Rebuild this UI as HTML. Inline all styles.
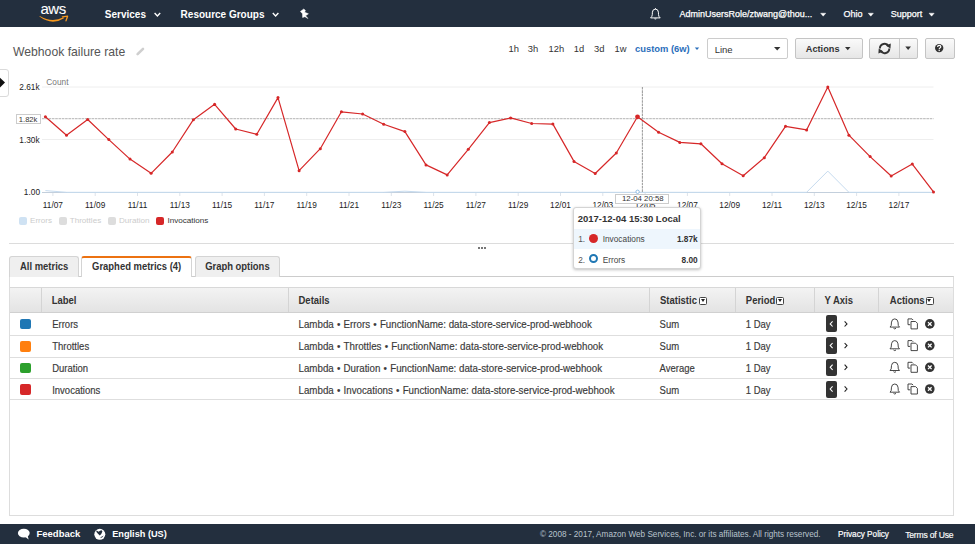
<!DOCTYPE html>
<html><head><meta charset="utf-8">
<style>
*{box-sizing:border-box;margin:0;padding:0}
html,body{width:975px;height:544px;overflow:hidden;background:#fff}
body{position:relative;font-family:"Liberation Sans",sans-serif;color:#333}
.a{position:absolute;white-space:nowrap;line-height:1}
.b{font-weight:bold}
#nav{position:absolute;left:0;top:0;width:975px;height:27px;background:#232f3e}
#foot{position:absolute;left:0;top:524px;width:975px;height:20px;background:#232f3e}
.w{color:#fff}
svg{position:absolute;left:0;top:0;overflow:visible}

.sel{position:absolute;border:1px solid #ccc;border-radius:2px;background:#fff}
.btn{position:absolute;border:1px solid #c4c4c4;border-radius:2px;background:linear-gradient(#fafafa,#e6e6e6)}
.lg{position:absolute;top:216.8px;width:8px;height:8px;border-radius:2px}
.tab{position:absolute;top:256px;height:20.8px;border:1px solid #d4d4d4;border-bottom:none;border-radius:3px 3px 0 0;background:#efefef;font-weight:bold;font-size:9.45px;line-height:19px;text-align:center;color:#333;white-space:nowrap}
.tt{display:inline-block;transform:scaleY(1.12);transform-origin:50% 70%}
.tab.act{background:#fff;border-top:2px solid #ec7211;line-height:18px;height:21px}
.th{position:absolute;background:linear-gradient(#f3f3f3,#e3e3e3);border-top:1px solid #d8d8d8;border-bottom:1px solid #d0d0d0}
.vs{position:absolute;top:288px;width:1px;height:24.4px;background:#d4d4d4}
.hd{top:296.4px;font-size:9.5px;color:#333;transform:scaleY(1.1);transform-origin:0 80%}
.dd{position:absolute;top:296.5px;width:8px;height:8px;border:1px solid #444;border-radius:1.5px;background:#fff}
.dd::after{content:"";position:absolute;left:0.7px;top:1.7px;width:0;height:0;border-left:2.3px solid transparent;border-right:2.3px solid transparent;border-top:3px solid #222}
.rb{position:absolute;left:9.8px;width:943.6px;height:1px;background:#dedede}
.sq{position:absolute;left:19.9px;width:11px;height:10.6px;border-radius:2px}
.td{font-size:9.5px;color:#3a3a3a;-webkit-text-stroke:0.15px #3a3a3a;transform:scaleY(1.14);transform-origin:0 80%}
.dt{font-size:9.75px}
.bu{margin:0 3.2px}
.yb{position:absolute;left:825.5px;width:11.4px;height:17.2px;border-radius:2px;background:#333}
</style></head><body>

<div id="nav"></div>
<!-- AWS logo -->
<div class="a w" style="left:40.4px;top:0.5px;font-size:15px;letter-spacing:-0.4px;-webkit-text-stroke:0.1px #fff">aws</div>
<svg width="975" height="30" style="top:0">
  <path d="M39.4,16.6 Q52,26 64,18.2 L63.5,17.3 Q52,23.2 39.8,16 Z" fill="#f7981d"/>
  <path d="M62.4,16.8 L67.6,16.2 L66,20.8" fill="none" stroke="#f7981d" stroke-width="1.3" stroke-linejoin="round" stroke-linecap="round"/>
  <!-- chevrons -->
  <path d="M154.6,13 L157.4,15.9 L160.2,13" fill="none" stroke="#fff" stroke-width="1.4"/>
  <path d="M272.8,13 L275.6,15.9 L278.4,13" fill="none" stroke="#fff" stroke-width="1.4"/>
  <path d="M820.6,13.2 L825.8,13.2 L823.2,16.2 Z" fill="#fff" stroke="#fff" stroke-width="0.4" stroke-linejoin="round"/>
  <path d="M868.2,13.2 L873.4,13.2 L870.8,16.2 Z" fill="#fff" stroke="#fff" stroke-width="0.4" stroke-linejoin="round"/>
  <path d="M929,13.2 L934.2,13.2 L931.6,16.2 Z" fill="#fff" stroke="#fff" stroke-width="0.4" stroke-linejoin="round"/>
  <!-- pin -->
  <path d="M300.4,11.4 L303.8,9 L305.4,10.4 L304.6,12.2 L308.4,13.8 L305.6,15.8 L307.9,18.5 L304.9,16.7 L302.6,17.5 L302.5,13.8 Z" fill="#fff" stroke="#fff" stroke-width="0.5" stroke-linejoin="round"/>
  <!-- bell -->
  <path d="M650.6,17.9 L660.2,17.9 Q658.6,16.6 658.5,14.6 L658.4,12.2 Q658.2,9.1 655.4,9.1 Q652.6,9.1 652.4,12.2 L652.3,14.6 Q652.2,16.6 650.6,17.9 Z" fill="none" stroke="#fff" stroke-width="1" stroke-linejoin="round"/>
  <path d="M654,18.6 Q655.4,20.6 656.8,18.6 Z" fill="#fff"/><rect x="655" y="8" width="0.8" height="1.3" fill="#fff"/>
</svg>
<div class="a b w" style="left:104.8px;top:10px;font-size:10px">Services</div>
<div class="a b w" style="left:180.6px;top:10px;font-size:10px">Resource Groups</div>
<div class="a w" style="left:679.5px;top:9.8px;font-size:9px;-webkit-text-stroke:0.25px #fff">AdminUsersRole/ztwang@thou...</div>
<div class="a w" style="left:843.4px;top:9.8px;font-size:9px;-webkit-text-stroke:0.25px #fff">Ohio</div>
<div class="a w" style="left:890.8px;top:9.8px;font-size:9px;-webkit-text-stroke:0.25px #fff">Support</div>

<!-- title -->
<div class="a" style="left:13px;top:45.5px;font-size:12.2px;color:#555">Webhook failure rate</div>


<!-- toolbar -->
<div class="a" style="left:508.6px;top:43.9px;font-size:9.4px;color:#333">1h</div>
<div class="a" style="left:527.7px;top:43.9px;font-size:9.4px;color:#333">3h</div>
<div class="a" style="left:548.6px;top:43.9px;font-size:9.4px;color:#333">12h</div>
<div class="a" style="left:573.8px;top:43.9px;font-size:9.4px;color:#333">1d</div>
<div class="a" style="left:594px;top:43.9px;font-size:9.4px;color:#333">3d</div>
<div class="a" style="left:614.5px;top:43.9px;font-size:9.4px;color:#333">1w</div>
<div class="a b" style="left:635px;top:43.9px;font-size:9.4px;color:#2a6ebb">custom (6w)</div>
<div class="sel" style="left:707px;top:38px;width:81px;height:21px"></div>
<div class="a" style="left:714.7px;top:45px;font-size:9.5px;color:#333">Line</div>
<div class="btn" style="left:795.3px;top:38px;width:67.5px;height:21px"></div>
<div class="a b" style="left:805.8px;top:44.6px;font-size:9.2px;color:#333">Actions</div>
<div class="btn" style="left:869.4px;top:38px;width:48.3px;height:21px"></div>
<div style="position:absolute;left:899px;top:39px;width:1px;height:19px;background:#c8c8c8"></div>
<div class="btn" style="left:924.5px;top:38px;width:30px;height:21px"></div>

<!-- left toggle button -->
<div style="position:absolute;left:-3px;top:68.8px;width:11.8px;height:28px;border:1px solid #dadada;border-radius:3px;background:#fff"></div>

<!-- y labels -->
<div class="a" style="right:935.4px;top:82.9px;font-size:8.3px;color:#222">2.61k</div>
<div class="a" style="right:935.4px;top:136.2px;font-size:8.3px;color:#222">1.30k</div>
<div class="a" style="right:935px;top:188.4px;font-size:8.3px;color:#222">1.00</div>
<div class="a" style="left:46.3px;top:77.5px;font-size:8.3px;color:#777">Count</div>
<div style="position:absolute;left:16px;top:114px;width:25.4px;height:9.7px;border:1px solid #ccc;background:#fff"></div>
<div class="a" style="left:18.8px;top:115.5px;font-size:7.6px;color:#333">1.82k</div>

<svg width="975" height="280" style="top:0">
  <g stroke="#eeeeee" stroke-width="1">
    <line x1="42" y1="87" x2="933.5" y2="87"/>
    <line x1="42" y1="139.5" x2="933.5" y2="139.5"/>
  </g>
  <line x1="42" y1="118.6" x2="933.5" y2="118.6" stroke="#c2c2c2" stroke-width="1.3" stroke-dasharray="2.6,0.7"/>
  <g stroke="#dde3ea" stroke-width="1"><line x1="52.9" y1="192.5" x2="52.9" y2="196" /><line x1="95.2" y1="192.5" x2="95.2" y2="196" /><line x1="137.5" y1="192.5" x2="137.5" y2="196" /><line x1="179.8" y1="192.5" x2="179.8" y2="196" /><line x1="222.1" y1="192.5" x2="222.1" y2="196" /><line x1="264.4" y1="192.5" x2="264.4" y2="196" /><line x1="306.7" y1="192.5" x2="306.7" y2="196" /><line x1="349.0" y1="192.5" x2="349.0" y2="196" /><line x1="391.3" y1="192.5" x2="391.3" y2="196" /><line x1="433.6" y1="192.5" x2="433.6" y2="196" /><line x1="475.9" y1="192.5" x2="475.9" y2="196" /><line x1="518.2" y1="192.5" x2="518.2" y2="196" /><line x1="560.5" y1="192.5" x2="560.5" y2="196" /><line x1="602.8" y1="192.5" x2="602.8" y2="196" /><line x1="645.1" y1="192.5" x2="645.1" y2="196" /><line x1="687.4" y1="192.5" x2="687.4" y2="196" /><line x1="729.7" y1="192.5" x2="729.7" y2="196" /><line x1="772.0" y1="192.5" x2="772.0" y2="196" /><line x1="814.3" y1="192.5" x2="814.3" y2="196" /><line x1="856.6" y1="192.5" x2="856.6" y2="196" /><line x1="898.9" y1="192.5" x2="898.9" y2="196" /></g>
  <line x1="42" y1="192.5" x2="933.5" y2="192.5" stroke="#c3cfdc" stroke-width="1.2"/>
  <polyline points="45.4,190.6 66.5,192.3 383.7,192.3 404.9,191.2 426,192.3 806.6,192.3 827.8,171.1 848.9,192.3 933.5,192.3" fill="none" stroke="#c6dbef" stroke-width="1"/>
  <line x1="642.4" y1="87" x2="642.4" y2="192.5" stroke="#a0a0a0" stroke-width="1.1" stroke-dasharray="2.6,0.7"/>
  <polyline points="45.4,116.7 66.5,135.2 87.7,119.5 108.8,139.6 130.0,159.1 151.1,173.3 172.3,152.0 193.4,119.7 214.6,104.3 235.7,129.0 256.8,134.3 278.0,97.6 299.1,170.7 320.3,148.7 341.4,111.8 362.6,114.0 383.7,124.3 404.9,131.6 426.0,164.9 447.2,174.9 468.3,149.3 489.4,122.6 510.6,117.9 531.7,123.5 552.9,124.1 574.0,161.4 595.2,173.5 616.3,153.0 637.5,116.8 658.6,132.3 679.8,142.4 700.9,143.8 722.0,163.8 743.2,175.7 764.3,157.7 785.5,126.3 806.6,129.9 827.8,87.1 848.9,135.2 870.1,156.6 891.2,176.0 912.3,164.1 933.5,191.9" fill="none" stroke="#d62728" stroke-width="1.2" stroke-linejoin="round"/>
  <g fill="#d62728"><circle cx="45.4" cy="116.7" r="1.5"/><circle cx="66.5" cy="135.2" r="1.5"/><circle cx="87.7" cy="119.5" r="1.5"/><circle cx="108.8" cy="139.6" r="1.5"/><circle cx="130.0" cy="159.1" r="1.5"/><circle cx="151.1" cy="173.3" r="1.5"/><circle cx="172.3" cy="152.0" r="1.5"/><circle cx="193.4" cy="119.7" r="1.5"/><circle cx="214.6" cy="104.3" r="1.5"/><circle cx="235.7" cy="129.0" r="1.5"/><circle cx="256.8" cy="134.3" r="1.5"/><circle cx="278.0" cy="97.6" r="1.5"/><circle cx="299.1" cy="170.7" r="1.5"/><circle cx="320.3" cy="148.7" r="1.5"/><circle cx="341.4" cy="111.8" r="1.5"/><circle cx="362.6" cy="114.0" r="1.5"/><circle cx="383.7" cy="124.3" r="1.5"/><circle cx="404.9" cy="131.6" r="1.5"/><circle cx="426.0" cy="164.9" r="1.5"/><circle cx="447.2" cy="174.9" r="1.5"/><circle cx="468.3" cy="149.3" r="1.5"/><circle cx="489.4" cy="122.6" r="1.5"/><circle cx="510.6" cy="117.9" r="1.5"/><circle cx="531.7" cy="123.5" r="1.5"/><circle cx="552.9" cy="124.1" r="1.5"/><circle cx="574.0" cy="161.4" r="1.5"/><circle cx="595.2" cy="173.5" r="1.5"/><circle cx="616.3" cy="153.0" r="1.5"/><circle cx="658.6" cy="132.3" r="1.5"/><circle cx="679.8" cy="142.4" r="1.5"/><circle cx="700.9" cy="143.8" r="1.5"/><circle cx="722.0" cy="163.8" r="1.5"/><circle cx="743.2" cy="175.7" r="1.5"/><circle cx="764.3" cy="157.7" r="1.5"/><circle cx="785.5" cy="126.3" r="1.5"/><circle cx="806.6" cy="129.9" r="1.5"/><circle cx="827.8" cy="87.1" r="1.5"/><circle cx="848.9" cy="135.2" r="1.5"/><circle cx="870.1" cy="156.6" r="1.5"/><circle cx="891.2" cy="176.0" r="1.5"/><circle cx="912.3" cy="164.1" r="1.5"/><circle cx="933.5" cy="191.9" r="1.5"/><circle cx="637.5" cy="116.8" r="2.4"/></g>
  <circle cx="637.6" cy="191.8" r="1.7" fill="#fff" stroke="#8fbce3" stroke-width="1"/>
  <g font-family="Liberation Sans" font-size="8.3" fill="#222" text-anchor="middle"><text x="52.9" y="208">11/07</text><text x="95.2" y="208">11/09</text><text x="137.5" y="208">11/11</text><text x="179.8" y="208">11/13</text><text x="222.1" y="208">11/15</text><text x="264.4" y="208">11/17</text><text x="306.7" y="208">11/19</text><text x="349.0" y="208">11/21</text><text x="391.3" y="208">11/23</text><text x="433.6" y="208">11/25</text><text x="475.9" y="208">11/27</text><text x="518.2" y="208">11/29</text><text x="560.5" y="208">12/01</text><text x="602.8" y="208">12/03</text><text x="645.1" y="208">12/05</text><text x="687.4" y="208">12/07</text><text x="729.7" y="208">12/09</text><text x="772.0" y="208">12/11</text><text x="814.3" y="208">12/13</text><text x="856.6" y="208">12/15</text><text x="898.9" y="208">12/17</text></g>
</svg>

<!-- legend -->
<div class="lg" style="left:19.2px;background:#cfe2f3"></div>
<div class="a" style="left:30px;top:216.5px;font-size:8.1px;color:#ccc">Errors</div>
<div class="lg" style="left:58.6px;background:#ddd"></div>
<div class="a" style="left:69.7px;top:216.5px;font-size:8.1px;color:#ccc">Throttles</div>
<div class="lg" style="left:108.3px;background:#ddd"></div>
<div class="a" style="left:119px;top:216.5px;font-size:8.1px;color:#ccc">Duration</div>
<div class="lg" style="left:156.3px;background:#d62728"></div>
<div class="a" style="left:167.4px;top:216.5px;font-size:8.1px;color:#333">Invocations</div>

<!-- separator -->
<div style="position:absolute;left:9px;top:242.5px;width:945px;height:1.5px;background:#dcdcdc"></div>
<div style="position:absolute;left:478px;top:247px;width:2px;height:2px;background:#777"></div>
<div style="position:absolute;left:481px;top:247px;width:2px;height:2px;background:#777"></div>
<div style="position:absolute;left:484px;top:247px;width:2px;height:2px;background:#777"></div>

<!-- panel -->
<div style="position:absolute;left:9.3px;top:276px;width:945px;height:240px;border:1px solid #ddd;border-top-color:#ccc;background:#fff"></div>
<div class="tab" style="left:9.3px;width:69.7px"><span class="tt">All metrics</span></div>
<div class="tab act" style="left:81.2px;width:111px"><span class="tt">Graphed metrics (4)</span></div>
<div class="tab" style="left:194.5px;width:85.8px"><span class="tt">Graph options</span></div>

<!-- table -->
<div class="th" style="left:9.8px;top:287.3px;width:943.6px;height:25.4px"></div>
<div class="vs" style="left:40.9px"></div>
<div class="vs" style="left:287.7px"></div>
<div class="vs" style="left:648.6px"></div>
<div class="vs" style="left:735.2px"></div>
<div class="vs" style="left:813.5px"></div>
<div class="vs" style="left:878.3px"></div>
<div class="a b hd" style="left:51.7px">Label</div>
<div class="a b hd" style="left:298.5px">Details</div>
<div class="a b hd" style="left:660px">Statistic</div>
<div class="a b hd" style="left:745.8px">Period</div>
<div class="a b hd" style="left:824.5px">Y Axis</div>
<div class="a b hd" style="left:889.8px">Actions</div>
<div class="dd" style="left:699px"></div>
<div class="dd" style="left:776px"></div>
<div class="dd" style="left:925.5px"></div>

<div class="rb" style="top:334.8px"></div><div class="sq" style="top:318.9px;background:#1f77b4"></div><div class="a td" style="left:52.2px;top:319.5px">Errors</div><div class="a td dt" style="left:298.5px;top:319.5px">Lambda<span class="bu">&bull;</span>Errors<span class="bu">&bull;</span>FunctionName: data-store-service-prod-webhook</div><div class="a td" style="left:659.6px;top:319.5px">Sum</div><div class="a td" style="left:745.8px;top:319.5px">1 Day</div><div class="yb" style="top:315.3px"></div><div class="rb" style="top:356.6px"></div><div class="sq" style="top:341.1px;background:#ff7f0e"></div><div class="a td" style="left:52.2px;top:342.3px">Throttles</div><div class="a td dt" style="left:298.5px;top:342.3px">Lambda<span class="bu">&bull;</span>Throttles<span class="bu">&bull;</span>FunctionName: data-store-service-prod-webhook</div><div class="a td" style="left:659.6px;top:342.3px">Sum</div><div class="a td" style="left:745.8px;top:342.3px">1 Day</div><div class="yb" style="top:337.3px"></div><div class="rb" style="top:378px"></div><div class="sq" style="top:362.9px;background:#2ca02c"></div><div class="a td" style="left:52.2px;top:364.3px">Duration</div><div class="a td dt" style="left:298.5px;top:364.3px">Lambda<span class="bu">&bull;</span>Duration<span class="bu">&bull;</span>FunctionName: data-store-service-prod-webhook</div><div class="a td" style="left:659.6px;top:364.3px">Average</div><div class="a td" style="left:745.8px;top:364.3px">1 Day</div><div class="yb" style="top:359.1px"></div><div class="rb" style="top:399px"></div><div class="sq" style="top:384.1px;background:#d62728"></div><div class="a td" style="left:52.2px;top:385.9px">Invocations</div><div class="a td dt" style="left:298.5px;top:385.9px">Lambda<span class="bu">&bull;</span>Invocations<span class="bu">&bull;</span>FunctionName: data-store-service-prod-webhook</div><div class="a td" style="left:659.6px;top:385.9px">Sum</div><div class="a td" style="left:745.8px;top:385.9px">1 Day</div><div class="yb" style="top:380.9px"></div>

<!-- timestamp box -->
<div style="position:absolute;left:615.4px;top:194px;width:54.1px;height:9.5px;border:1px solid #ccc;background:#fff"></div>
<div class="a" style="left:622px;top:195.3px;font-size:7.8px;color:#333">12-04 20:58</div>

<!-- tooltip -->
<div style="position:absolute;left:573.3px;top:206.8px;width:127.8px;height:62.6px;border:1px solid #d4d4d4;border-radius:3px;background:#fff;box-shadow:0 1px 3px rgba(0,0,0,0.25)"></div>
<div style="position:absolute;left:574.3px;top:228.8px;width:125.8px;height:19.9px;background:#eef6fd"></div>
<div class="a b" style="left:577.7px;top:214px;font-size:9.5px;color:#333">2017-12-04 15:30 Local</div>
<div class="a" style="left:578.2px;top:235.2px;font-size:8.3px;color:#555">1.</div>
<div style="position:absolute;left:589px;top:234.2px;width:9.2px;height:9.2px;border-radius:50%;background:#d62728"></div>
<div class="a" style="left:602.7px;top:235.2px;font-size:8.3px;color:#444">Invocations</div>
<div class="a b" style="right:277.3px;top:235.2px;font-size:8.3px;color:#333">1.87k</div>
<div class="a" style="left:578.2px;top:255.5px;font-size:8.3px;color:#555">2.</div>
<div style="position:absolute;left:589px;top:254.3px;width:9.2px;height:9.2px;border-radius:50%;border:2px solid #1f77b4;background:#fff"></div>
<div class="a" style="left:602.7px;top:255.5px;font-size:8.3px;color:#444">Errors</div>
<div class="a b" style="right:277.3px;top:255.5px;font-size:8.3px;color:#333">8.00</div>




<!-- footer -->
<div id="foot"></div>
<div class="a b w" style="left:36.5px;top:529.2px;font-size:9.5px">Feedback</div>
<div class="a b w" style="left:112.2px;top:530.1px;font-size:9.2px">English (US)</div>
<div class="a" style="left:540px;top:531.2px;font-size:8.2px;color:#b9c3cd">© 2008 - 2017, Amazon Web Services, Inc. or its affiliates. All rights reserved.</div>
<div class="a w" style="left:838px;top:531.2px;font-size:8.2px;-webkit-text-stroke:0.2px #fff">Privacy Policy</div>
<div class="a w" style="left:905.2px;top:530.6px;font-size:8.6px;letter-spacing:-0.2px;-webkit-text-stroke:0.15px #fff">Terms of Use</div>

<!-- icons overlay -->
<svg width="975" height="544" style="top:0">
  <!-- custom caret -->
  <path d="M694.8,47.6 L699.2,47.6 L697,50 Z" fill="#2a6ebb"/>
  <!-- Line select caret -->
  <path d="M774,47 L780.4,47 L777.2,50.6 Z" fill="#333"/>
  <!-- Actions caret -->
  <path d="M845,47 L850.5,47 L847.75,50.2 Z" fill="#333"/>
  <!-- refresh dropdown caret -->
  <path d="M905.3,46.5 L911,46.5 L908.15,49.9 Z" fill="#333"/>
  <!-- refresh icon -->
  <g fill="none" stroke="#333" stroke-width="1.9">
    <path d="M879.9,48.5 A4.7,4.7 0 0 1 888.67,46.15"/>
    <path d="M889.3,48.5 A4.7,4.7 0 0 1 880.53,50.85"/>
  </g>
  <path d="M885.8,45.4 L890.8,43.4 L890.5,48.6 Z" fill="#333"/>
  <path d="M883.4,51.6 L878.4,53.6 L878.7,48.4 Z" fill="#333"/>
  <!-- help icon -->
  <circle cx="939.2" cy="48.1" r="4.2" fill="#333"/>
  <path d="M937.6,46.9 Q937.6,45.3 939.2,45.3 Q940.8,45.3 940.8,46.7 Q940.8,47.5 939.9,48 Q939.2,48.4 939.2,49.2" fill="none" stroke="#fff" stroke-width="1.2"/>
  <rect x="938.6" y="49.9" width="1.2" height="1.2" fill="#fff"/>
  <!-- pencil -->
  <path d="M137.6,54.2 L143,48.8" stroke="#cfcfcf" stroke-width="2.6" stroke-linecap="round"/>
  <!-- left toggle triangle -->
  <path d="M0,77.8 L5,82.6 L0,87.4 Z" fill="#111"/>
  <path d="M0,78.5 L-1,82.6 L0,86.7 Z" fill="#111"/>
  <path d="M832.6,321.3 L830.2,323.9 L832.6,326.5" fill="none" stroke="#fff" stroke-width="1.1"/><path d="M844.6,321.3 L847,323.9 L844.6,326.5" fill="none" stroke="#222" stroke-width="1.1"/><path d="M890,327.1 L899.5,327.1 L898.3,325.5 L898,322.1 Q897.6,318.9 894.75,318.9 Q891.9,318.9 891.5,322.1 L891.2,325.5 Z" fill="none" stroke="#333" stroke-width="0.9"/><path d="M893.5,328.3 Q894.75,329.5 896,328.3" fill="none" stroke="#333" stroke-width="0.9"/><path d="M910.2,324.7 L908,324.7 L908,318.9 L912,318.9 L913.2,320.1" fill="none" stroke="#333" stroke-width="0.9"/><path d="M911,321.5 L915.6,321.5 L917.4,323.3 L917.4,328.9 L911,328.9 Z" fill="none" stroke="#333" stroke-width="0.9"/><circle cx="929.8" cy="323.9" r="4.8" fill="#333"/><path d="M928,322.1 L931.6,325.7 M931.6,322.1 L928,325.7" stroke="#fff" stroke-width="1.3"/><path d="M832.6,343.0 L830.2,345.6 L832.6,348.2" fill="none" stroke="#fff" stroke-width="1.1"/><path d="M844.6,343.0 L847,345.6 L844.6,348.2" fill="none" stroke="#222" stroke-width="1.1"/><path d="M890,348.8 L899.5,348.8 L898.3,347.2 L898,343.8 Q897.6,340.6 894.75,340.6 Q891.9,340.6 891.5,343.8 L891.2,347.2 Z" fill="none" stroke="#333" stroke-width="0.9"/><path d="M893.5,350.0 Q894.75,351.2 896,350.0" fill="none" stroke="#333" stroke-width="0.9"/><path d="M910.2,346.4 L908,346.4 L908,340.6 L912,340.6 L913.2,341.8" fill="none" stroke="#333" stroke-width="0.9"/><path d="M911,343.2 L915.6,343.2 L917.4,345.0 L917.4,350.6 L911,350.6 Z" fill="none" stroke="#333" stroke-width="0.9"/><circle cx="929.8" cy="345.6" r="4.8" fill="#333"/><path d="M928,343.8 L931.6,347.4 M931.6,343.8 L928,347.4" stroke="#fff" stroke-width="1.3"/><path d="M832.6,364.7 L830.2,367.3 L832.6,369.9" fill="none" stroke="#fff" stroke-width="1.1"/><path d="M844.6,364.7 L847,367.3 L844.6,369.9" fill="none" stroke="#222" stroke-width="1.1"/><path d="M890,370.5 L899.5,370.5 L898.3,368.9 L898,365.5 Q897.6,362.3 894.75,362.3 Q891.9,362.3 891.5,365.5 L891.2,368.9 Z" fill="none" stroke="#333" stroke-width="0.9"/><path d="M893.5,371.7 Q894.75,372.9 896,371.7" fill="none" stroke="#333" stroke-width="0.9"/><path d="M910.2,368.1 L908,368.1 L908,362.3 L912,362.3 L913.2,363.5" fill="none" stroke="#333" stroke-width="0.9"/><path d="M911,364.9 L915.6,364.9 L917.4,366.7 L917.4,372.3 L911,372.3 Z" fill="none" stroke="#333" stroke-width="0.9"/><circle cx="929.8" cy="367.3" r="4.8" fill="#333"/><path d="M928,365.5 L931.6,369.1 M931.6,365.5 L928,369.1" stroke="#fff" stroke-width="1.3"/><path d="M832.6,386.4 L830.2,389.0 L832.6,391.6" fill="none" stroke="#fff" stroke-width="1.1"/><path d="M844.6,386.4 L847,389.0 L844.6,391.6" fill="none" stroke="#222" stroke-width="1.1"/><path d="M890,392.2 L899.5,392.2 L898.3,390.6 L898,387.2 Q897.6,384.0 894.75,384.0 Q891.9,384.0 891.5,387.2 L891.2,390.6 Z" fill="none" stroke="#333" stroke-width="0.9"/><path d="M893.5,393.4 Q894.75,394.6 896,393.4" fill="none" stroke="#333" stroke-width="0.9"/><path d="M910.2,389.8 L908,389.8 L908,384.0 L912,384.0 L913.2,385.2" fill="none" stroke="#333" stroke-width="0.9"/><path d="M911,386.6 L915.6,386.6 L917.4,388.4 L917.4,394.0 L911,394.0 Z" fill="none" stroke="#333" stroke-width="0.9"/><circle cx="929.8" cy="389.0" r="4.8" fill="#333"/><path d="M928,387.2 L931.6,390.8 M931.6,387.2 L928,390.8" stroke="#fff" stroke-width="1.3"/>
  <!-- footer icons -->
  <ellipse cx="23.8" cy="533.1" rx="5.9" ry="4.3" fill="#fff"/>
  <path d="M24.5,536.2 L28.6,539.6 L27.6,535.6 Z" fill="#fff"/>
  <circle cx="99.8" cy="534.3" r="5.5" fill="#fff"/>
  <path d="M96.2,530.4 Q97.5,530.6 98.6,531.8 Q100,530.2 101.6,530.2 L102.4,531.6 Q101.8,533.8 99.8,535.6 Q97.8,533.6 96.5,532 Z" fill="#232f3e"/>
  <path d="M100.6,537.6 Q102.5,537 103.2,536" fill="none" stroke="#232f3e" stroke-width="0.9"/>
</svg>
</body></html>
